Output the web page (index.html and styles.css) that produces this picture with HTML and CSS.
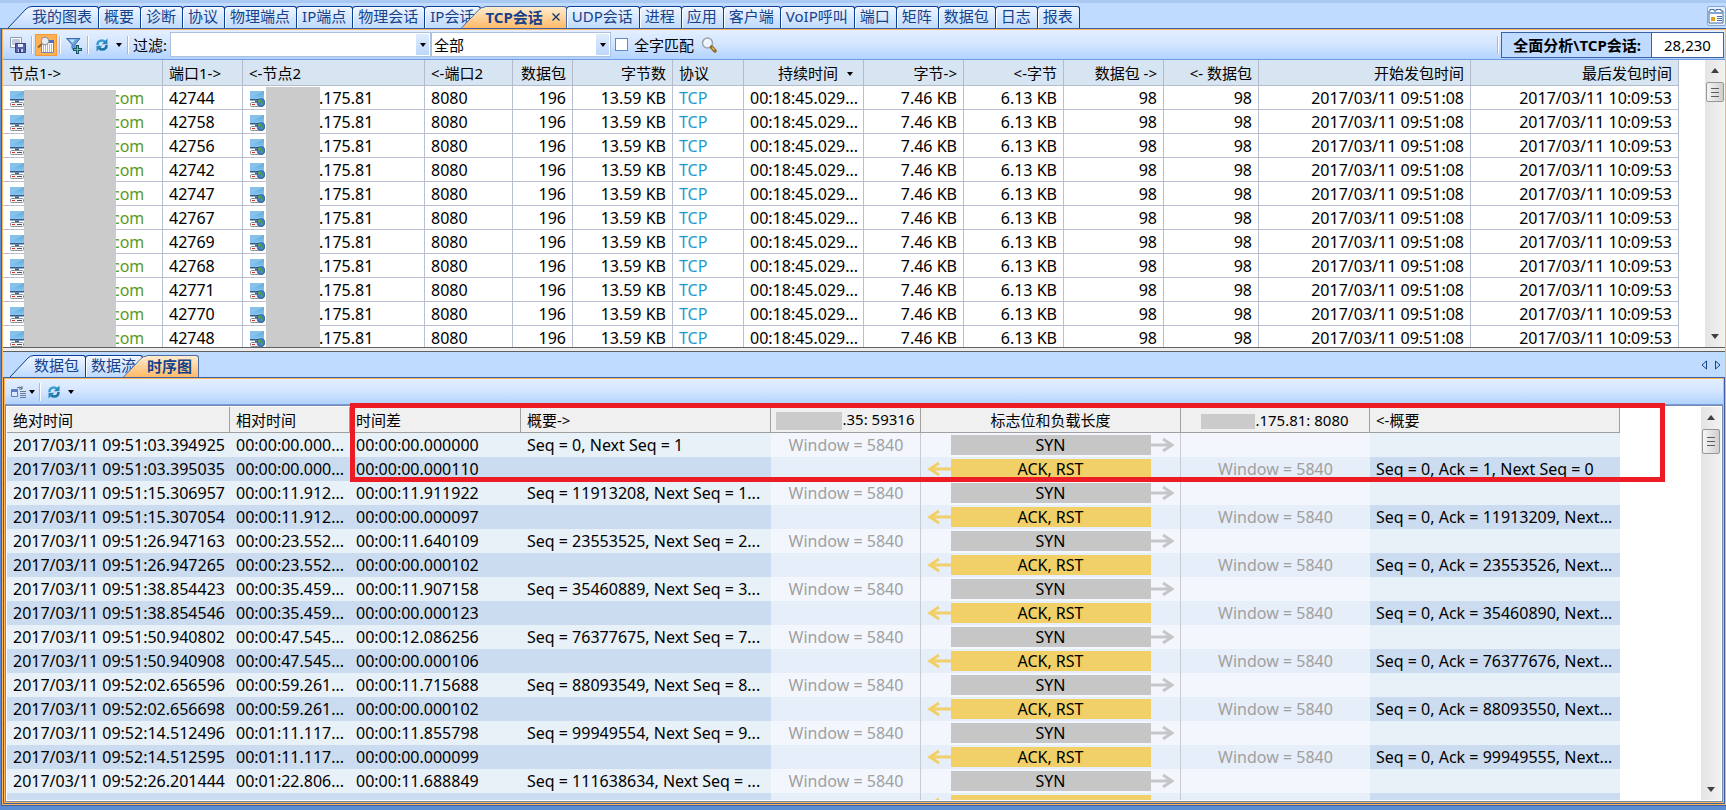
FILE: index.html
```html
<!DOCTYPE html>
<html lang="zh-CN">
<head>
  <meta charset="UTF-8">
  <meta name="viewport" content="width=device-width, initial-scale=1.0">
  <title>TCP会话</title>
  <link rel="stylesheet" href="styles.css">
</head>
<body>
  <svg class="defs" aria-hidden="true">
    <defs>
      <linearGradient id="tabFill" x1="0" y1="0" x2="0" y2="1">
        <stop offset="0" stop-color="#f0f6ff"/><stop offset="1" stop-color="#bedaff"/>
      </linearGradient>
      <linearGradient id="activeFill" x1="0" y1="0" x2="0" y2="1">
        <stop offset="0" stop-color="#ffecd0"/><stop offset="1" stop-color="#ffb864"/>
      </linearGradient>
      <linearGradient id="screenFill" x1="0" y1="0" x2="0" y2="1">
        <stop offset="0" stop-color="#5fa9dc"/><stop offset="1" stop-color="#8cc8ee"/>
      </linearGradient>
    </defs>
    <symbol id="refresh" viewBox="0 0 14 14">
      <path d="M2.5 7Q2.5 2.500 7 2.500Q8.500 2.500 10 4" fill="none" stroke="#3a9fd0" stroke-width="2.600"/>
      <path d="M12.500 .5V6.200H6.800Z" fill="#2c86b8"/>
      <path d="M11.500 7Q11.500 11.500 7 11.500Q5.500 11.500 4 10" fill="none" stroke="#1f76a5" stroke-width="2.600"/>
      <path d="M1.500 13.500V7.800H7.200Z" fill="#2c86b8"/>
    </symbol>
    <symbol id="host" viewBox="0 0 16 16">
      <path d="M1 0h14v9H1z" fill="url(#screenFill)"/>
      <path d="M1 0h14L1 7z" fill="#86c2ea"/>
      <path d="M1 8h14v1.500H1z" fill="#2b5c8c"/>
      <path d="M6 9.500h4v1.500H6z" fill="#3d5f80"/>
      <rect x="1.500" y="11.500" width="13" height="4" rx="1" fill="#f4f4f4" stroke="#8b929c"/>
      <path d="M3 13h3v1H3z" fill="#d42d22"/><path d="M8 13h5v1H8z" fill="#555"/>
    </symbol>
    <symbol id="globeHost" viewBox="0 0 16 16">
      <use href="#host" width="16" height="16"/>
      <circle cx="12" cy="11.500" r="4" fill="#3f7fc2" stroke="#2b5682" stroke-width=".6"/>
      <path d="M10 8.500l3 .5-1 2-2 1-1-2zM12 12l2-.5-.5 2-1.500 1z" fill="#57a83c"/>
    </symbol>
  </svg>

  <nav class="tabs main-tabs" aria-label="视图">
    <button class="tab slanted"><svg class="slant" viewBox="0 0 24 22"><path d="M0 22L18 3Q20.500 .5 24 .5V22Z" fill="url(#tabFill)"/><path d="M0 22L18 3Q20.500 .5 24 .5" fill="none" stroke="#0b3f95"/></svg>我的图表</button>
    <button class="tab">概要</button>
    <button class="tab">诊断</button>
    <button class="tab">协议</button>
    <button class="tab">物理端点</button>
    <button class="tab">IP端点</button>
    <button class="tab">物理会话</button>
    <button class="tab">IP会话</button>
    <button class="tab slanted active"><svg class="slant" viewBox="0 0 24 22"><path d="M0 22L18 3Q20.500 .5 24 .5V22Z" fill="url(#activeFill)"/><path d="M0 22L18 3Q20.500 .5 24 .5" fill="none" stroke="#4a6ea8"/></svg>TCP会话<svg class="close" viewBox="0 0 8 8"><path d="M.5 .5l7 7M7.500 .5l-7 7" stroke="#12356e" stroke-width="1.300"/></svg></button>
    <button class="tab">UDP会话</button>
    <button class="tab">进程</button>
    <button class="tab">应用</button>
    <button class="tab">客户端</button>
    <button class="tab">VoIP呼叫</button>
    <button class="tab">端口</button>
    <button class="tab">矩阵</button>
    <button class="tab">数据包</button>
    <button class="tab">日志</button>
    <button class="tab">报表</button>
    <button class="view-btn" aria-label="选择视图">
      <svg viewBox="0 0 16 16" width="16" height="16"><path d="M1 3V15H15V3H13V1.500H8V3H6V1.500H2V3Z" fill="#fff" stroke="#456c9e"/><path d="M1 4h14v2H1z" fill="#7fa4d6"/><path d="M3 9h4v4H3z" fill="#e8a21a"/><path d="M9 8.500h5M9 10.500h5M9 12.500h5" stroke="#456c9e"/></svg>
    </button>
  </nav>

  <main class="pane">
    <div class="toolbar">
      <button class="tool" aria-label="保存"><svg viewBox="0 0 18 18"><path d="M1.500 1.500h11v10h-11z" fill="#fff" stroke="#8c9bb5"/><path d="M3 4h8M3 6h8M3 8h5" stroke="#8797b8"/><path d="M6.500 7.500h10v9h-10z" fill="#5b62ad" stroke="#3a3f80"/><path d="M9 8h5v3H9z" fill="#e8ecf8"/><path d="M9 13h5v3H9z" fill="#c9cfe8"/><path d="M10 13h2v3h-2z" fill="#333a78"/></svg></button>
      <span class="sep"></span>
      <button class="tool pressed" aria-label="查找"><svg viewBox="0 0 18 18"><path d="M4.500 6.500h12v10h-12z" fill="#fff" stroke="#7086b0"/><path d="M11 4h6v3h-6z" fill="#4a72bd"/><path d="M6 9h9M6 11h9M6 13h9M6 15h9" stroke="#5b6d96" stroke-dasharray="1 1"/><circle cx="8" cy="5" r="3.800" fill="#e6edf4" stroke="#8b8f98"/><path d="M5 8L1 11.500" stroke="#8d6630" stroke-width="2"/></svg></button>
      <span class="sep"></span>
      <button class="tool" aria-label="添加过滤器"><svg viewBox="0 0 18 18"><path d="M1.500 2.500H15L10 8.500V15L7 12.500V8.500Z" fill="#6aa3dd" stroke="#3a6cac"/><path d="M4 3.500h6L7.500 7Z" fill="#c6e0fa"/><path d="M11 9h3v3h3v3h-3v3h-3v-3H8v-3h3z" fill="#1b5364"/><path d="M12 10h1v3h3v1h-3v3h-1v-3H9v-1h3z" fill="#63c6a5"/></svg></button>
      <span class="sep"></span>
      <button class="tool drop" aria-label="刷新"><svg class="small" viewBox="0 0 14 14"><use href="#refresh"/></svg><i class="arrow"></i></button>
      <span class="sep"></span>
      <label class="filter-label" for="filter">过滤:</label>
      <span class="combo wide"><select id="filter"><option></option></select></span>
      <span class="combo"><select aria-label="范围"><option>全部</option></select></span>
      <label class="match"><input type="checkbox">全字匹配</label>
      <button class="tool search" aria-label="搜索"><svg viewBox="0 0 18 18"><circle cx="7.500" cy="7" r="5" fill="#eef4fb" stroke="#9aa2ae" stroke-width="1.500"/><path d="M5 6Q6 4 8 4" fill="none" stroke="#fff"/><path d="M11.500 11L15 15" stroke="#8a6a2c" stroke-width="3.500" stroke-linecap="round"/><path d="M12 11.500L14.500 14" stroke="#e7b847" stroke-width="1.500"/></svg></button>
      <span class="sep push"></span>
      <div class="counter"><strong>全面分析\TCP会话:</strong><span>28,230</span></div>
    </div>

    <section class="sessions">
      <div class="list-body">
        <table class="session-table">
          <colgroup>
            <col class="w160"><col class="w80"><col class="w182"><col class="w88"><col class="w60"><col class="w100"><col class="w71"><col class="w120"><col class="w100"><col class="w100"><col class="w100"><col class="w95"><col class="w212"><col class="w208"><col>
          </colgroup>
          <thead>
            <tr>
              <th>节点1-&gt;</th><th>端口1-&gt;</th><th>&lt;-节点2</th><th>&lt;-端口2</th>
              <th class="num">数据包</th><th class="num">字节数</th><th>协议</th>
              <th class="num">持续时间<i class="arrow sort"></i></th>
              <th class="num">字节-&gt;</th><th class="num">&lt;-字节</th>
              <th class="num">数据包 -&gt;</th><th class="num">&lt;- 数据包</th>
              <th class="num">开始发包时间</th><th class="num">最后发包时间</th><th class="filler"></th>
            </tr>
          </thead>
          <tbody id="sessionRows"></tbody>
        </table>
        <div class="mask mask-node1"></div>
        <div class="mask mask-node2"></div>
      </div>
      <div class="scrollbar">
        <i class="up"></i><div class="thumb"></div><i class="down"></i>
      </div>
    </section>

    <div class="splitter"></div>

    <nav class="tabs sub-tabs" aria-label="详情">
      <button class="tab slanted"><svg class="slant" viewBox="0 0 24 22"><path d="M0 22L18 3Q20.500 .5 24 .5V22Z" fill="url(#tabFill)"/><path d="M0 22L18 3Q20.500 .5 24 .5" fill="none" stroke="#0b3f95"/></svg>数据包</button>
      <button class="tab">数据流</button>
      <button class="tab slanted active"><svg class="slant" viewBox="0 0 24 22"><path d="M0 22L18 3Q20.500 .5 24 .5V22Z" fill="url(#activeFill)"/><path d="M0 22L18 3Q20.500 .5 24 .5" fill="none" stroke="#4a6ea8"/></svg>时序图</button>
      <span class="tab-scroll">
        <button aria-label="向左"><svg viewBox="0 0 6 10"><path d="M5.500 1v8L1 5Z" fill="none" stroke="#15428b"/></svg></button>
        <button aria-label="向右"><svg viewBox="0 0 6 10"><path d="M.5 1v8L5 5Z" fill="none" stroke="#15428b"/></svg></button>
      </span>
    </nav>

    <section class="pane sub-pane">
      <div class="toolbar sub-toolbar">
        <button class="tool columns" aria-label="显示列"><svg viewBox="0 0 16 12"><path d="M.5 3.500h6v7h-6z" fill="#dce8fb" stroke="#5b7ec2"/><path d="M1 4h5v2H1z" fill="#5b7ec2"/><path d="M6 2Q9 0 11 2.500M11 0v3H8" fill="none" stroke="#50607c"/><path d="M9 5.500h6M9 7.500h6M9 9.500h6M9 11.500h6" stroke="#6d7b92"/></svg><i class="arrow"></i></button>
        <span class="sep"></span>
        <button class="tool drop" aria-label="刷新"><svg class="small" viewBox="0 0 14 14"><use href="#refresh"/></svg><i class="arrow"></i></button>
      </div>
      <div class="timeline">
        <div class="list-body">
          <table class="time-table">
            <colgroup>
              <col class="w223"><col class="w120"><col class="w171"><col class="w250"><col class="w150"><col class="w260"><col class="w189"><col class="w250"><col>
            </colgroup>
            <thead>
              <tr>
                <th>绝对时间</th><th>相对时间</th><th>时间差</th><th>概要-&gt;</th>
                <th class="peer"><span class="blot tall"></span>.35: 59316</th>
                <th class="mid">标志位和负载长度</th>
                <th class="peer"><span class="blot"></span>.175.81: 8080</th>
                <th>&lt;-概要</th><th class="filler"></th>
              </tr>
            </thead>
            <tbody id="timeRows"></tbody>
          </table>
        </div>
        <div class="scrollbar">
          <i class="up"></i><div class="thumb"></div><i class="down"></i>
        </div>
      </div>
      <div class="highlight"></div>
    </section>
  </main>

  <script>
    const ports = [42744, 42758, 42756, 42742, 42747, 42767, 42769, 42768, 42771, 42770, 42748];

    document.getElementById('sessionRows').innerHTML = ports.map(port => `
      <tr>
        <td><span class="node"><svg class="host"><use href="#host"/></svg><span class="domain">com</span></span></td>
        <td>${port}</td>
        <td><span class="node"><svg class="host"><use href="#globeHost"/></svg><span class="address">.175.81</span></span></td>
        <td>8080</td>
        <td class="num">196</td>
        <td class="num">13.59 KB</td>
        <td class="proto">TCP</td>
        <td class="num">00:18:45.029...</td>
        <td class="num">7.46 KB</td>
        <td class="num">6.13 KB</td>
        <td class="num">98</td>
        <td class="num">98</td>
        <td class="num">2017/03/11 09:51:08</td>
        <td class="num">2017/03/11 10:09:53</td>
        <td class="filler"></td>
      </tr>`).join('');

    // [time, relative time, delta, summary]; SYN and ACK packets alternate
    const packets = [
      ['09:51:03.394925', '00:00:00.000...', '00:00:00.000000', 'Seq = 0, Next Seq = 1'],
      ['09:51:03.395035', '00:00:00.000...', '00:00:00.000110', 'Seq = 0, Ack = 1, Next Seq = 0'],
      ['09:51:15.306957', '00:00:11.912...', '00:00:11.911922', 'Seq = 11913208, Next Seq = 1...'],
      ['09:51:15.307054', '00:00:11.912...', '00:00:00.000097', 'Seq = 0, Ack = 11913209, Next...'],
      ['09:51:26.947163', '00:00:23.552...', '00:00:11.640109', 'Seq = 23553525, Next Seq = 2...'],
      ['09:51:26.947265', '00:00:23.552...', '00:00:00.000102', 'Seq = 0, Ack = 23553526, Next...'],
      ['09:51:38.854423', '00:00:35.459...', '00:00:11.907158', 'Seq = 35460889, Next Seq = 3...'],
      ['09:51:38.854546', '00:00:35.459...', '00:00:00.000123', 'Seq = 0, Ack = 35460890, Next...'],
      ['09:51:50.940802', '00:00:47.545...', '00:00:12.086256', 'Seq = 76377675, Next Seq = 7...'],
      ['09:51:50.940908', '00:00:47.545...', '00:00:00.000106', 'Seq = 0, Ack = 76377676, Next...'],
      ['09:52:02.656596', '00:00:59.261...', '00:00:11.715688', 'Seq = 88093549, Next Seq = 8...'],
      ['09:52:02.656698', '00:00:59.261...', '00:00:00.000102', 'Seq = 0, Ack = 88093550, Next...'],
      ['09:52:14.512496', '00:01:11.117...', '00:00:11.855798', 'Seq = 99949554, Next Seq = 9...'],
      ['09:52:14.512595', '00:01:11.117...', '00:00:00.000099', 'Seq = 0, Ack = 99949555, Next...'],
      ['09:52:26.201444', '00:01:22.806...', '00:00:11.688849', 'Seq = 111638634, Next Seq = ...'],
      ['', '', '', '']
    ];

    const rightArrow = '<svg class="flow to-right" viewBox="0 0 24 18"><path d="M0 9H21M12 3L21 9L12 15" fill="none" stroke="#c6c6c6" stroke-width="3"/></svg>';
    const leftArrow = '<svg class="flow" viewBox="0 0 24 18"><path d="M24 9H3M12 3L3 9L12 15" fill="none" stroke="#f0d067" stroke-width="3"/></svg>';

    document.getElementById('timeRows').innerHTML = packets.map(([time, relative, delta, summary], i) => {
      const syn = i % 2 === 0;
      const win = time ? 'Window = 5840' : '';
      return `
      <tr>
        <td>${time ? '2017/03/11 ' + time : ''}</td>
        <td>${relative}</td>
        <td>${delta}</td>
        <td>${syn ? summary : ''}</td>
        <td class="peer">${syn ? win : ''}</td>
        <td class="peer mid"><div class="packet"><span class="${syn ? 'syn' : 'ack'}">${time ? (syn ? 'SYN' : 'ACK, RST') : ''}</span>${syn ? rightArrow : leftArrow}</div></td>
        <td class="peer">${syn ? '' : win}</td>
        <td>${syn ? '' : summary}</td>
        <td class="filler"></td>
      </tr>`;
    }).join('');
  </script>
</body>
</html>
```

FILE: styles.css
```css
* {
  margin: 0;
  padding: 0;
  box-sizing: border-box;
}

body {
  display: flex;
  flex-direction: column;
  height: 100vh;
  overflow: hidden;
  padding-bottom: 5px;
  border-top: 3px solid #a9c8f2;
  font-family: "Noto Sans", "Noto Sans CJK SC", sans-serif;
  font-size: 15px;
  line-height: 20px;
  color: #000;
  background-color: #5b8bd0;
}

button,
select,
input {
  font: inherit;
  color: inherit;
}

button {
  border: none;
  background: none;
}

.defs {
  position: absolute;
  width: 0;
  height: 0;
}

/* Tabs */
.tabs {
  display: flex;
  flex: none;
  align-items: flex-end;
  height: 26px;
  border-bottom: 1px solid #3b62a3;
  background-color: #bfdbff;
}

.main-tabs {
  padding-left: 8px;
}

.sub-tabs {
  padding-left: 7px;
}

.tab {
  flex: none;
  height: 22px;
  margin-left: -1px;
  padding: 0 6px 2px 5px;
  border: 1px solid #0b3f95;
  border-bottom: none;
  border-radius: 4px 3px 0 0;
  background: linear-gradient(#f0f6ff, #bedaff);
  box-shadow: inset 1px 1px 0 #fff;
  color: #15428b;
  line-height: 19px;
  white-space: nowrap;
}

.slanted {
  position: relative;
  margin-left: 24px;
  padding-left: 0;
  border-left: none;
  border-radius: 0 3px 0 0;
  box-shadow: none;
}

.slant {
  position: absolute;
  top: -1px;
  right: 100%;
  width: 24px;
  height: 22px;
}

.active {
  height: 23px;
  margin-left: 4px;
  margin-bottom: -1px;
  border-color: #4a6ea8;
  background: linear-gradient(#ffecd0, #ffb864);
  font-weight: bold;
}

.active .slant {
  height: 23px;
}

.close {
  width: 8px;
  height: 8px;
  margin-left: 9px;
  vertical-align: 2px;
}

.view-btn {
  align-self: center;
  width: 19px;
  height: 20px;
  margin-left: auto;
  border: 1px solid #86a7d6;
  border-radius: 2px;
  background: #e7f0fd;
}

.view-btn svg {
  display: block;
}

.tab-scroll {
  display: flex;
  align-self: center;
  gap: 8px;
  margin-left: auto;
  padding-right: 4px;
}

.tab-scroll svg {
  display: block;
  width: 6px;
  height: 10px;
}

/* Panes */
.pane {
  position: relative;
  display: flex;
  flex: 1;
  flex-direction: column;
  min-height: 0;
  margin-left: 2px;
  border: 1px solid #fdb45c;
  box-shadow: 0 0 0 1px #3b62a3;
}

.sub-pane {
  margin: 0 1px 1px;
}

.toolbar {
  display: flex;
  flex: none;
  align-items: center;
  height: 30px;
  padding: 0 1px 0 4px;
  border-bottom: 1px solid #6f9ddf;
  background: linear-gradient(#e3efff, #d3e5ff 50%, #b1d3ff);
}

.sub-toolbar {
  height: 26px;
}

.tool {
  display: flex;
  flex: none;
  align-items: center;
  justify-content: center;
  width: 22px;
  height: 22px;
}

.tool svg {
  width: 18px;
  height: 18px;
}

.tool .small {
  width: 14px;
  height: 14px;
}

.pressed {
  background-color: #ffb052;
  border: 1px solid #f29a3c;
}

.drop {
  gap: 7px;
  width: 34px;
}

.columns {
  gap: 2px;
  width: 28px;
}

.columns svg {
  width: 16px;
  height: 12px;
}

.search {
  margin-left: 4px;
}

.sep {
  width: 2px;
  height: 18px;
  margin: 0 2px;
  border-left: 1px solid #9abbe9;
  border-right: 1px solid #fff;
}

.push {
  margin-left: auto;
}

.arrow {
  display: inline-block;
  border: 3px solid transparent;
  border-top: 4px solid #000;
  border-bottom: none;
}

.filter-label {
  margin: 0 3px 0 2px;
}

.combo {
  position: relative;
  width: 180px;
  height: 25px;
  border: 1px solid #abc1de;
  background-color: #fff;
}

.wide {
  width: 261px;
}

.combo select {
  width: 100%;
  height: 23px;
  padding-left: 2px;
  border: none;
  appearance: none;
  background: linear-gradient(#dfecfd, #bcd7fb) right 1px center / 13px 21px no-repeat;
}

.combo::after {
  content: "";
  position: absolute;
  top: 10px;
  right: 4px;
  border: 3px solid transparent;
  border-top: 4px solid #000;
  border-bottom: none;
  pointer-events: none;
}

.match {
  display: flex;
  align-items: center;
  gap: 6px;
  margin-left: 4px;
}

.match input {
  width: 13px;
  height: 13px;
  border: 1px solid #5b8bd0;
  appearance: none;
  background-color: #fff;
}

.counter {
  display: flex;
  height: 26px;
  border: 1px solid #3b62a3;
  line-height: 24px;
}

.counter strong {
  padding: 0 10px 0 11px;
  background-color: #bfdbff;
}

.counter span {
  width: 72px;
  border-left: 1px solid #3b62a3;
  background-color: #fff;
  text-align: center;
}

/* Lists */
.sessions,
.timeline {
  display: flex;
  min-height: 0;
  background-color: #fff;
}

.sessions {
  flex: none;
  height: 287px;
}

.timeline {
  flex: 1;
  padding: 1px;
  border: 1px solid #7b8ba5;
}

.list-body {
  position: relative;
  flex: 1;
  min-width: 0;
  overflow: hidden;
}

table {
  width: 100%;
  table-layout: fixed;
  border-collapse: separate;
  border-spacing: 0;
}

th {
  height: 26px;
  padding: 0 6px;
  font-weight: normal;
  text-align: left;
  white-space: nowrap;
}

td {
  height: 24px;
  padding: 0 6px;
  font-size: 16px;
  line-height: 23px;
  white-space: nowrap;
}

.session-table th {
  border-right: 1px solid #b4bccb;
  border-bottom: 1px solid #b4bccb;
  background-color: #d7e4f2;
}

.session-table td {
  padding-top: 2px;
  border-right: 1px solid #b7c1d1;
  border-bottom: 1px solid #b7c1d1;
  line-height: 21px;
}

.session-table .filler,
.time-table .filler {
  border: none;
  background: none;
}

.num {
  text-align: right;
}

.session-table .proto {
  color: #1c9ad0;
}

.sort {
  margin: 0 4px 3px 9px;
}

.w60 { width: 60px; }
.w71 { width: 71px; }
.w80 { width: 80px; }
.w88 { width: 88px; }
.w95 { width: 95px; }
.w100 { width: 100px; }
.w120 { width: 120px; }
.w150 { width: 150px; }
.w160 { width: 160px; }
.w171 { width: 171px; }
.w182 { width: 182px; }
.w189 { width: 189px; }
.w208 { width: 208px; }
.w212 { width: 212px; }
.w223 { width: 223px; }
.w250 { width: 250px; }
.w260 { width: 260px; }

.node {
  display: flex;
  align-items: center;
}

.host {
  width: 16px;
  height: 16px;
}

.domain {
  margin-left: 87px;
  color: #5a9a22;
}

.address {
  margin-left: 54px;
}

/* Grey blocks over the private part of the names */
.mask {
  position: absolute;
  bottom: 0;
  background-color: #cbcbcb;
}

.mask-node1 {
  top: 30px;
  left: 21px;
  width: 92px;
}

.mask-node2 {
  top: 27px;
  left: 263px;
  width: 54px;
}

.splitter {
  flex: none;
  height: 5px;
  border-top: 1px solid #606060;
  border-bottom: 1px solid #606060;
  background-color: #ededed;
}

/* Scrollbars */
.scrollbar {
  display: flex;
  flex: none;
  flex-direction: column;
  align-items: center;
  width: 20px;
  padding-right: 1px;
  background: linear-gradient(to right, #e4e4e4, #f2f2f2);
}

.up,
.down {
  border: 4px solid transparent;
}

.up {
  margin: 8px 0 9px;
  border-top: none;
  border-bottom: 5px solid #404040;
}

.down {
  margin: auto 0 8px;
  border-top: 5px solid #404040;
  border-bottom: none;
}

.thumb {
  width: 18px;
  height: 20px;
  border: 1px solid #979797;
  border-radius: 2px;
  background:
    repeating-linear-gradient(#5c5c5c 0 1px, transparent 1px 4px) center / 8px 9px no-repeat,
    linear-gradient(to right, #f5f5f5, #cfcfcf);
}

.timeline .thumb {
  height: 25px;
}

/* Time sequence */
.time-table th {
  border-right: 1px solid #a0a0a0;
  border-bottom: 1px solid #a0a0a0;
  background-color: #f0f0f0;
}

.time-table td {
  background-color: #e8f0f8;
}

.time-table tr:nth-child(even) td {
  background-color: #cbdcf0;
}

.time-table td.peer {
  padding: 0;
  background-color: #f3f7fd;
  color: #a0a0a0;
  text-align: center;
}

.time-table tr:nth-child(even) td.peer {
  background-color: #e6eef9;
}

.time-table tbody tr td.filler {
  background: none;
}

.time-table td.mid {
  border-right: 1px solid #c8cbd0;
  box-shadow: -1px 0 0 #c8cbd0;
  color: #000;
}

th.peer,
th.mid {
  text-align: center;
}

th.peer {
  padding: 0;
}

.blot {
  display: inline-block;
  width: 54px;
  height: 15px;
  background-color: #cbcbcb;
  vertical-align: middle;
}

.tall {
  width: 66px;
  height: 18px;
}

.packet {
  display: grid;
  grid-template-columns: 24px 200px 24px;
  align-items: center;
  justify-content: center;
}

.packet span {
  grid-column: 2;
  grid-row: 1;
  height: 20px;
  line-height: 20px;
}

.syn {
  background-color: #c6c6c6;
}

.ack {
  background-color: #f0d067;
}

.flow {
  grid-column: 1;
  grid-row: 1;
  width: 24px;
  height: 18px;
}

.to-right {
  grid-column: 3;
}

.highlight {
  position: absolute;
  top: 24px;
  left: 345px;
  width: 1315px;
  height: 79px;
  border: 5px solid #ed1c24;
}
```
